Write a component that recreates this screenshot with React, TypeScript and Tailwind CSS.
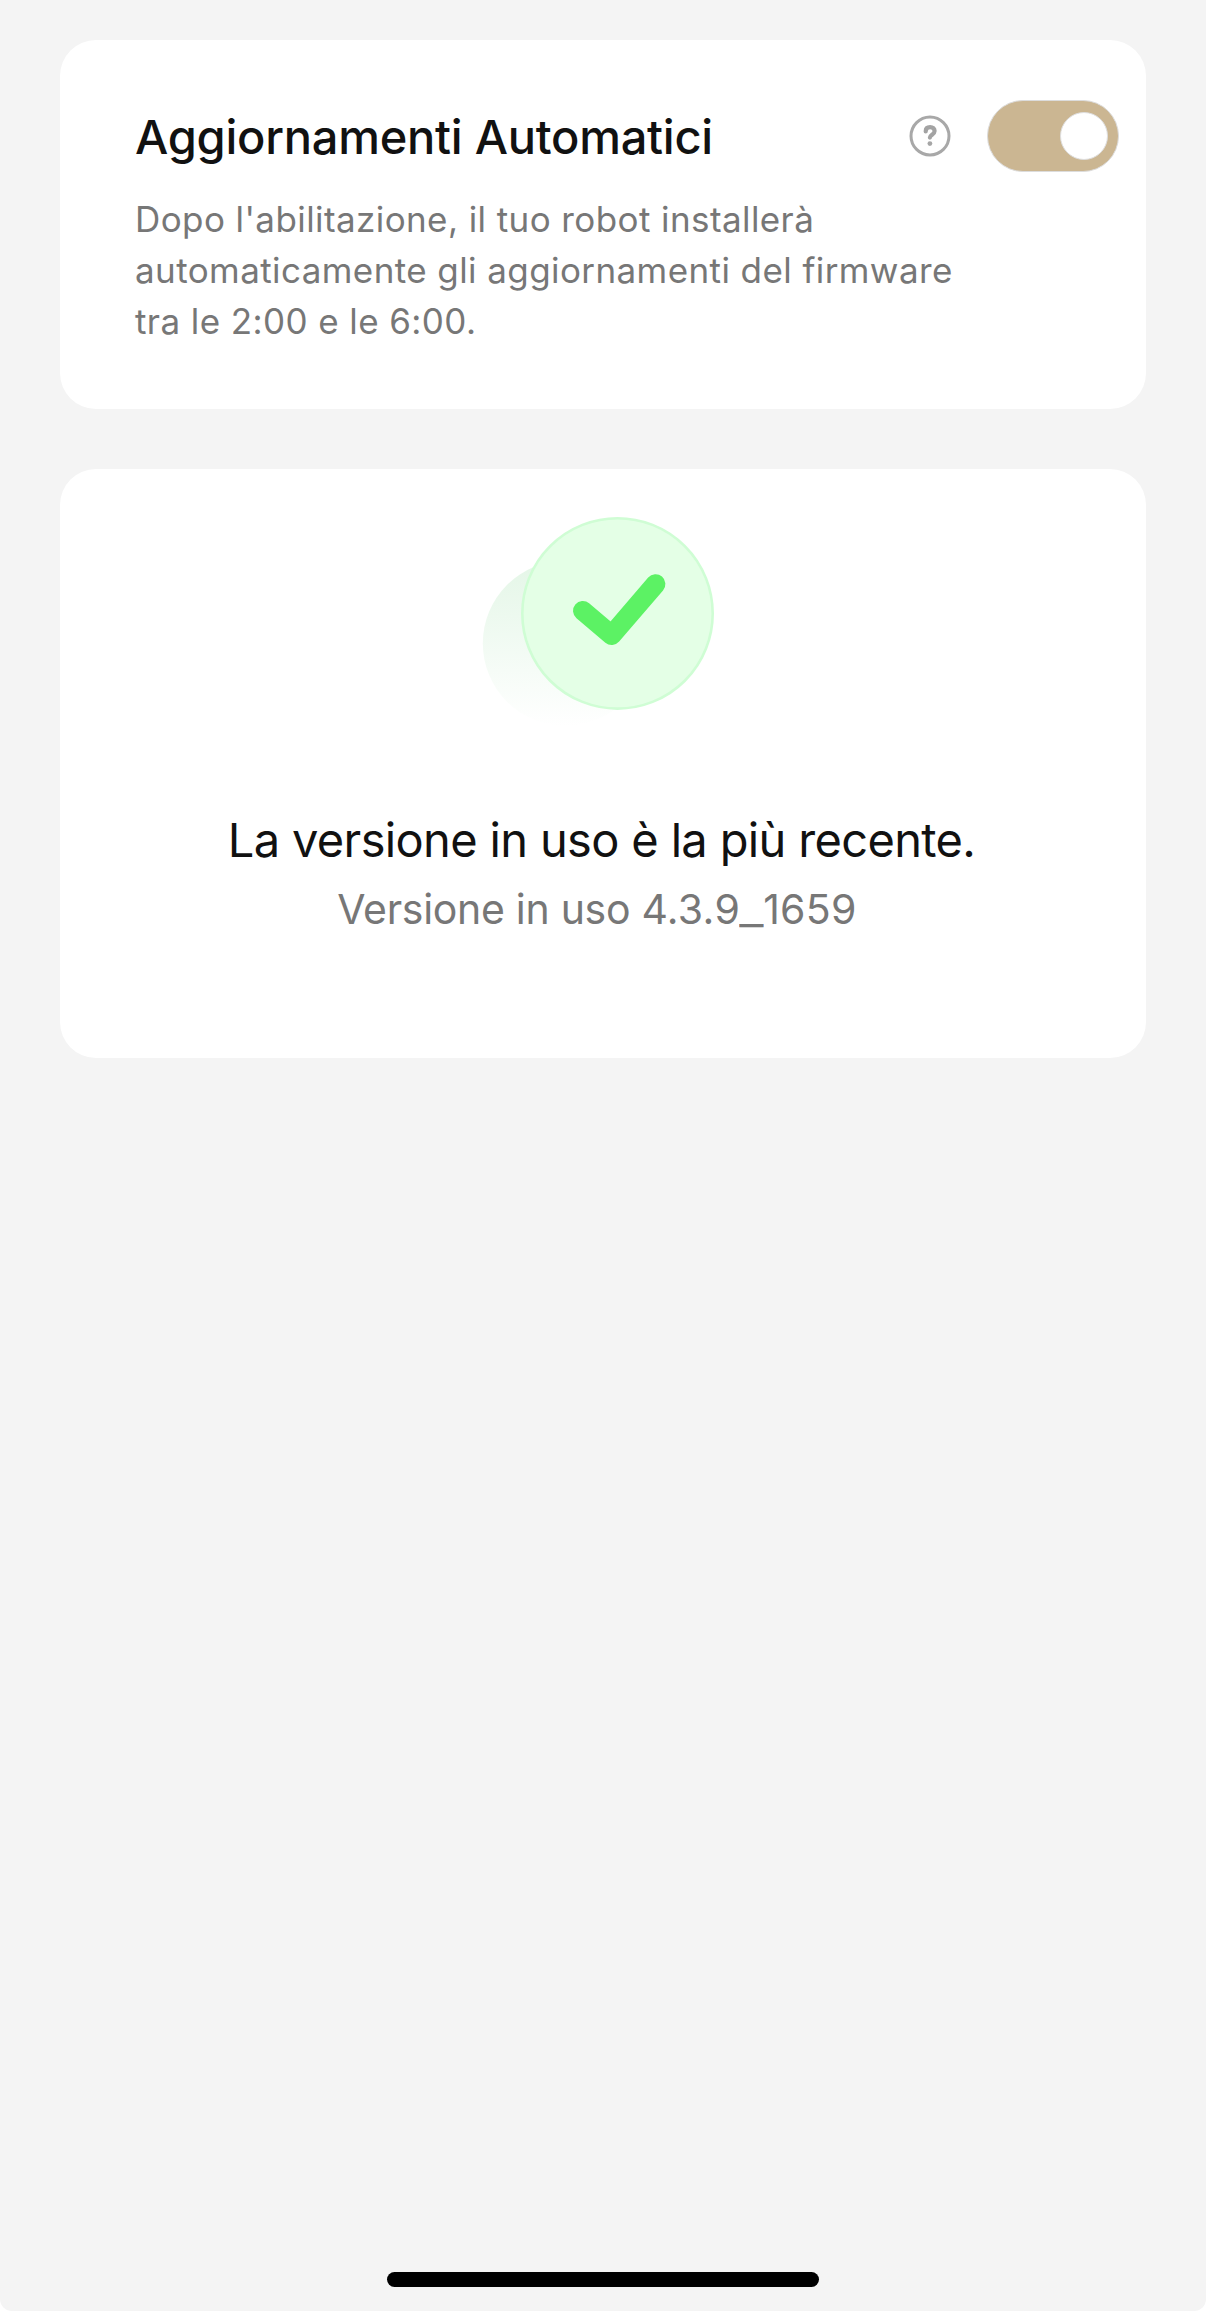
import { useState } from 'react'

// ─── HelpIcon ─────────────────────────────────────────────────────────────────

function HelpIcon() {
  return (
    <svg width="42" height="42" viewBox="0 0 42 42" fill="none">
      <circle cx="21" cy="21" r="19" stroke="#a8a8a8" strokeWidth="3" />
      <path
        d="M16.7 16.4c0-2.8 1.8-4.3 4.4-4.3 2.7 0 4.5 1.5 4.5 3.9 0 3.5-4.7 3.8-4.7 6.6"
        stroke="#a3a3a3"
        strokeWidth="4.2"
        strokeLinecap="round"
      />
      <circle cx="20.9" cy="28.6" r="2.4" fill="#a6a6a6" />
    </svg>
  )
}

// ─── Toggle ───────────────────────────────────────────────────────────────────

function Toggle({ checked, onChange }: { checked: boolean; onChange: (v: boolean) => void }) {
  return (
    <button
      role="switch"
      aria-checked={checked}
      aria-label="Aggiornamenti Automatici"
      onClick={() => onChange(!checked)}
      className={`flex h-[72px] w-[132px] items-center rounded-full border border-[#dcdcdc] px-[10px] ${
        checked ? 'justify-end bg-[#cbb692]' : 'justify-start bg-gray-300'
      }`}
    >
      <span className="size-12 rounded-full border border-[#dedede] bg-white" />
    </button>
  )
}

// ─── UpToDateBadge ────────────────────────────────────────────────────────────

function UpToDateBadge() {
  return (
    <svg width="232" height="216" viewBox="482 516 232 216" fill="none">
      <defs>
        <linearGradient id="halo" x1="565" y1="561" x2="565" y2="726" gradientUnits="userSpaceOnUse">
          <stop offset="0" stopColor="#e4f6e7" />
          <stop offset="1" stopColor="#ffffff" />
        </linearGradient>
      </defs>
      <circle cx="565.3" cy="643.3" r="82.5" fill="url(#halo)" />
      <circle cx="617.5" cy="613.4" r="95.2" fill="#e4ffe6" stroke="#cffdd4" strokeWidth="2.6" />
      <path
        d="M582.8 610.8 611.7 635.2 655.6 584"
        stroke="#5cf264"
        strokeWidth="19.6"
        strokeLinecap="round"
        strokeLinejoin="round"
      />
    </svg>
  )
}

// ─── Main Component ───────────────────────────────────────────────────────────

export default function App() {
  const [autoUpdate, setAutoUpdate] = useState(true)

  return (
    <div className="bg-white font-['Inter',sans-serif]">
      <div className="flex h-[2311px] flex-col rounded-b-xl bg-[#f4f4f4] px-[60px] pt-10 pb-6">
        {/* Aggiornamenti automatici */}
        <section className="h-[369px] rounded-[36px] bg-white pt-[60px] pr-[27px] pl-[75px]">
          <div className="flex h-[72px] items-center">
            <h1 className="flex-1 pt-[2px] text-[47px] leading-[58px] font-medium whitespace-nowrap tracking-[-0.25px] text-[#111]">
              Aggiornamenti Automatici
            </h1>
            <div className="mr-9">
              <HelpIcon />
            </div>
            <Toggle checked={autoUpdate} onChange={setAutoUpdate} />
          </div>
          <p className="mt-[22px] text-[35px] leading-[51px] tracking-[0.41px] whitespace-nowrap text-[#777]">
            Dopo l'abilitazione, il tuo robot installerà
            <br />
            automaticamente gli aggiornamenti del firmware
            <br />
            tra le 2:00 e le 6:00.
          </p>
        </section>

        {/* Stato del firmware */}
        <section className="mt-[60px] flex h-[589px] flex-col items-center rounded-[36px] bg-white pt-[47px]">
          <div className="mr-[10px]">
            <UpToDateBadge />
          </div>
          <p className="mt-[79px] mr-[3px] text-[47px] leading-[58px] tracking-[-0.65px] whitespace-nowrap text-[#111]">
            La versione in uso è la più recente.
          </p>
          <p className="mt-[15px] mr-[12px] text-[41px] leading-[50px] tracking-[-0.3px] whitespace-nowrap text-[#777]">
            Versione in uso{' '}
            <span className="tracking-[0.3px]">
              4.3.9<span className="mx-[2px] inline-block scale-x-130">_</span>1659
            </span>
          </p>
        </section>

        {/* Home indicator */}
        <div className="mt-auto h-[15px] w-[432px] self-center rounded-full bg-black" />
      </div>
    </div>
  )
}
